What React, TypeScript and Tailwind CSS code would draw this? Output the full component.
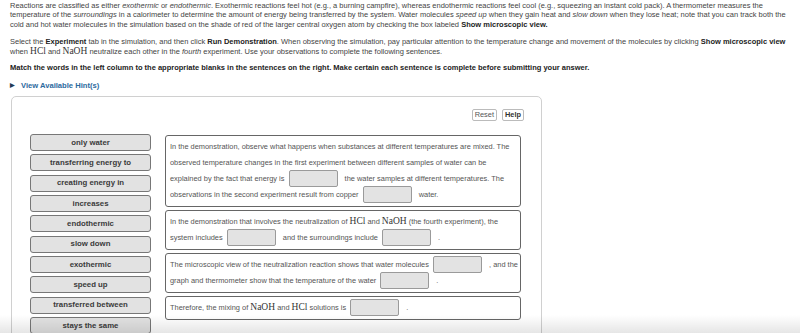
import React from "react";

const chips = [
  "only water",
  "transferring energy to",
  "creating energy in",
  "increases",
  "endothermic",
  "slow down",
  "exothermic",
  "speed up",
  "transferred between",
  "stays the same",
];

function Blank() {
  return (
    <span className="inline-block align-middle w-[49px] h-[17px] -my-[2px] ml-[2px] mr-[5px] bg-[#e3e3e3] border border-[#9a9a9a] rounded-[2px]" />
  );
}

function Chem({ children }: { children: React.ReactNode }) {
  return <span className="font-['Liberation_Serif',serif] text-[9.5px] leading-none text-[#333]">{children}</span>;
}

function L({ children }: { children: React.ReactNode }) {
  return <span className="block whitespace-nowrap">{children}</span>;
}

function Box({ children }: { children: React.ReactNode }) {
  return (
    <div className="border border-[#666] rounded-[3px] px-[4px] py-[3px] text-[7.42px] leading-[16px] text-[#555]">
      {children}
    </div>
  );
}

export default function App() {
  return (
    <div className="relative w-[800px] h-[333px] overflow-hidden bg-white font-['Liberation_Sans',Arial,sans-serif] text-[#444]">
      <div className="px-[10px] pt-[1px] text-[7.5px] leading-[9.4px]">
        <p>
          <L>
            Reactions are classified as either <i>exothermic</i> or <i>endothermic</i>. Exothermic reactions feel hot (e.g., a burning campfire), whereas endothermic reactions feel cool (e.g., squeezing an instant cold pack). A thermometer measures the
          </L>
          <L>
            temperature of the <i>surroundings</i> in a calorimeter to determine the amount of energy being transferred by the system. Water molecules <i>speed up</i> when they gain heat and <i>slow down</i> when they lose heat; note that you can track both the
          </L>
          <L>
            cold and hot water molecules in the simulation based on the shade of red of the larger central oxygen atom by checking the box labeled <b className="text-[#222]">Show microscopic view.</b>
          </L>
        </p>
        <p className="mt-[8px]">
          <L>
            Select the <b className="text-[#222]">Experiment</b> tab in the simulation, and then click <b className="text-[#222]">Run Demonstration</b>. When observing the simulation, pay particular attention to the temperature change and movement of the molecules by clicking <b className="text-[#222]">Show microscopic view</b>
          </L>
          <L>
            when <Chem>HCl</Chem> and <Chem>NaOH</Chem> neutralize each other in the <i>fourth</i> experiment. Use your observations to complete the following sentences.
          </L>
        </p>
        <p className="mt-[7px] font-bold text-[#222] whitespace-nowrap">
          Match the words in the left column to the appropriate blanks in the sentences on the right. Make certain each sentence is complete before submitting your answer.
        </p>
        <div className="mt-[8px] flex items-center gap-[6px] font-bold text-[#2c6a9e] text-[7.6px]">
          <span className="text-[#223a55] text-[6px]">▶</span>
          <span>View Available Hint(s)</span>
        </div>
      </div>

      <div className="ml-[11px] mt-[6px] w-[531px] h-[300px] border border-[#d0d0d0] rounded-[5px]">
        <div className="flex justify-end gap-[5px] pt-[12px] pr-[17px]">
          <button className="h-[12px] px-[2px] border border-[#bbb] rounded-[2px] text-[7.4px] leading-[10px] text-[#555] bg-white">Reset</button>
          <button className="h-[12px] px-[2px] border border-[#bbb] rounded-[2px] text-[7.4px] leading-[10px] font-bold text-[#333] bg-white">Help</button>
        </div>
        <div className="flex gap-[14px] pl-[18px] mt-[13px]">
          <div className="flex flex-col gap-[3.33px] w-[121px]">
            {chips.map((c) => (
              <div
                key={c}
                className="h-[17px] flex items-center justify-center bg-[#e2e2e2] border border-[#777] rounded-[3px] text-[7.8px] font-bold text-[#3a3a3a]"
              >
                {c}
              </div>
            ))}
          </div>
          <div className="flex flex-col gap-[3px] w-[356px] mt-[1px]">
            <Box>
              <L>In the demonstration, observe what happens when substances at different temperatures are mixed. The</L>
              <L>observed temperature changes in the first experiment between different samples of water can be</L>
              <L>explained by the fact that energy is <Blank /> the water samples at different temperatures. The</L>
              <L>observations in the second experiment result from copper <Blank /> water.</L>
            </Box>
            <Box>
              <L>
                In the demonstration that involves the neutralization of <Chem>HCl</Chem> and <Chem>NaOH</Chem> (the fourth experiment), the
              </L>
              <L>system includes <Blank /> and the surroundings include <Blank /> .</L>
            </Box>
            <Box>
              <L>The microscopic view of the neutralization reaction shows that water molecules <Blank /> , and the</L>
              <L>graph and thermometer show that the temperature of the water <Blank /> .</L>
            </Box>
            <Box>
              <L>
                Therefore, the mixing of <Chem>NaOH</Chem> and <Chem>HCl</Chem> solutions is <Blank /> .
              </L>
            </Box>
          </div>
        </div>
      </div>

      <div className="absolute left-0 right-0 bottom-0 h-[18px] bg-gradient-to-b from-transparent to-black/10 pointer-events-none" />
    </div>
  );
}
